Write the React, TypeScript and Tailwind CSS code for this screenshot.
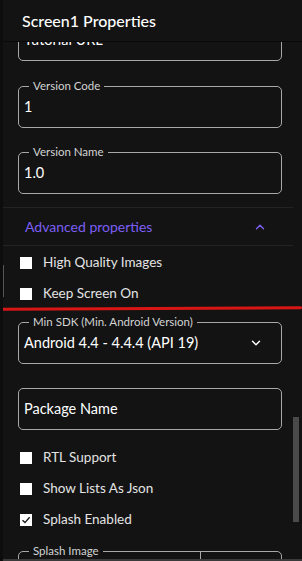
import { ChevronDown, ChevronUp } from "lucide-react";

function Field({ label, value, className = "" }: { label?: string; value: string; className?: string }) {
  return (
    <div className={`relative h-[42px] rounded-[5px] border border-[#a8a8a8] flex items-center px-[5px] ${className}`}>
      {label && (
        <span className="absolute -top-[8px] left-[10px] bg-[#131313] px-[4px] text-[11.5px] leading-[14px] text-[#d4d4d4]">
          {label}
        </span>
      )}
      <span className="text-[14.5px] text-white">{value}</span>
    </div>
  );
}

function Check({ label, checked = false }: { label: string; checked?: boolean }) {
  return (
    <div className="flex items-center h-[31px] pl-[2px] gap-[11px]">
      <div className="w-[12px] h-[12px] bg-white flex items-center justify-center">
        {checked && (
          <svg width="10" height="10" viewBox="0 0 10 10">
            <path d="M1.5 5.2 L4 7.6 L8.6 2.2" fill="none" stroke="#1b1b1b" strokeWidth="1.4" />
          </svg>
        )}
      </div>
      <span className="text-[13.5px] text-[#e4e4e4]">{label}</span>
    </div>
  );
}

export default function App() {
  return (
    <div className="relative w-[302px] h-[561px] bg-[#131313] flex flex-col overflow-hidden border-l-[3px] border-[#0d0d0d]" style={{ fontFamily: "Lato, 'Noto Sans', sans-serif" }}>
      <header className="h-[42px] shrink-0 border-b border-[#090909] flex items-center pl-[19px] text-[16px] font-medium text-white">
        Screen1 Properties
      </header>

      <div className="relative flex-1 overflow-hidden">
        <div className="flex flex-col mt-[-23px] pl-[15px] pr-[20px]">
          <Field value="Tutorial URL" />
          <Field label="Version Code" value="1" className="mt-[25px]" />
          <Field label="Version Name" value="1.0" className="mt-[24px]" />

          <div className="mt-[13px] mr-[-11px] ml-[-15px] border-y border-[#232323] h-[39px] flex items-center justify-between pl-[22px] pr-[26px]">
            <span className="text-[14px] text-[#7c5ef5]">Advanced properties</span>
            <ChevronUp size={14} strokeWidth={2.5} color="#7c5ef5" />
          </div>

          <div className="mt-[1px]">
            <Check label="High Quality Images" />
            <Check label="Keep Screen On" />
          </div>

          <div className="h-[3px] bg-[#d81616] ml-[-18px] mr-[-20px] mt-[-2px] rounded-full -rotate-[0.3deg]" />

          <div className="relative h-[42px] rounded-[5px] border border-[#a8a8a8] flex items-center justify-between pl-[5px] pr-[18px] mt-[12px]">
            <span className="absolute -top-[8px] left-[10px] bg-[#131313] px-[4px] text-[11.5px] leading-[14px] text-[#d4d4d4]">
              Min SDK (Min. Android Version)
            </span>
            <span className="text-[14.5px] text-white">Android 4.4 - 4.4.4 (API 19)</span>
            <ChevronDown size={14} strokeWidth={2.5} color="#ffffff" />
          </div>

          <Field value="Package Name" className="mt-[24px]" />

          <div className="mt-[12px]">
            <Check label="RTL Support" />
            <Check label="Show Lists As Json" />
            <Check label="Splash Enabled" checked />
          </div>

          <div className="relative mt-[16px] h-[42px] rounded-[5px] border border-[#a8a8a8] flex">
            <span className="absolute -top-[8px] left-[10px] bg-[#131313] px-[4px] text-[11.5px] leading-[14px] text-[#d4d4d4]">
              Splash Image
            </span>
            <div className="w-[182px] border-r border-[#a8a8a8]" />
          </div>
        </div>

        <div className="absolute right-[3px] top-[375px] w-[6px] h-[105px] bg-[#4a4a4a]" />
        <div className="absolute left-[-1px] top-[223px] w-[2px] h-[32px] bg-[#555555]" />
      </div>

      <div className="absolute bottom-0 left-0 right-0 h-[2px] bg-[#3a3a3a]" />
    </div>
  );
}
